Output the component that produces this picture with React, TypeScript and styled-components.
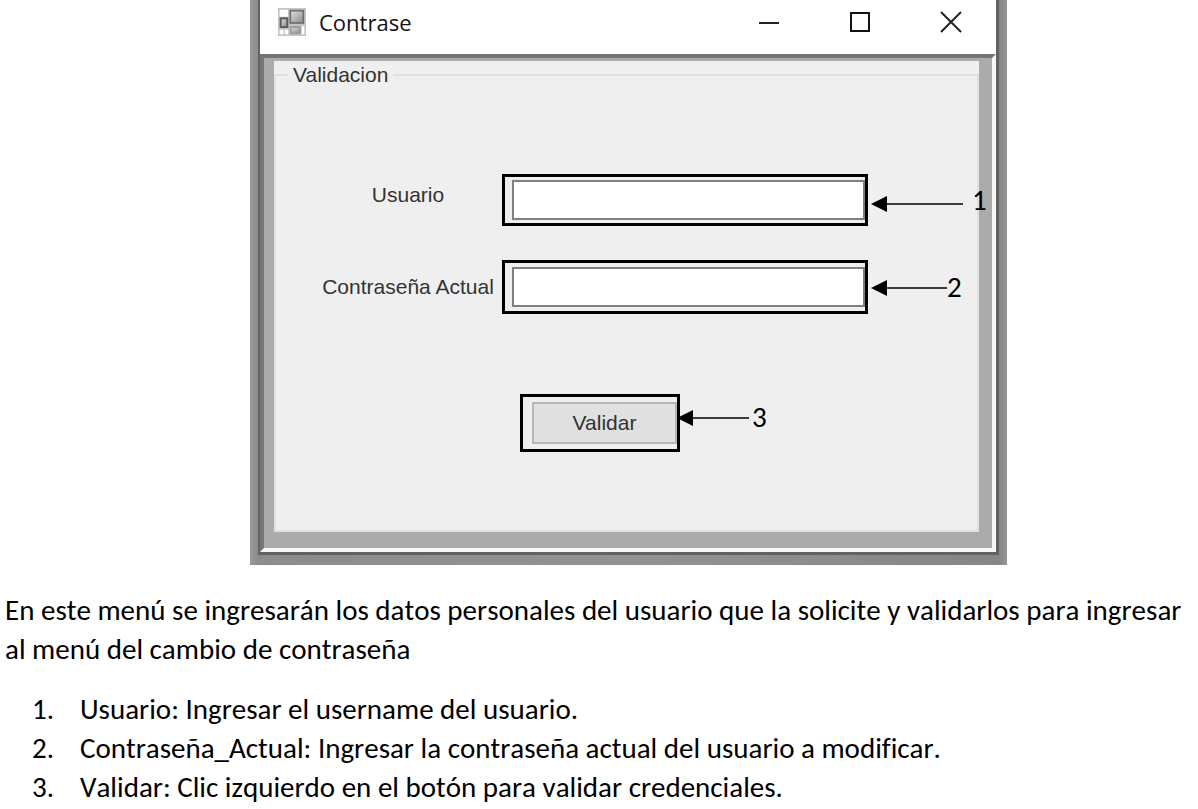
import React from "react";
import styled, { createGlobalStyle } from "styled-components";

const GlobalStyle = createGlobalStyle`
  *, *::before, *::after { box-sizing: border-box; }
  body {
    margin: 0;
    background: #fff;
    color: #000;
    font-family: Carlito, Lato, sans-serif;
    font-size: 29px;
    line-height: 39px;
    font-kerning: none;
    font-variant-ligatures: none;
  }
`;

type Align = "start" | "center" | "end";

const Page = styled.main`
  display: flex;
  flex-direction: column;
`;

const Figure = styled.figure`
  width: calc(100% - 250px);
  max-width: 757px;
  margin: 0 0 26px 250px;
  padding: 0 8px 10px;
  background: linear-gradient(to right, #9a9a9a, #8c8c8c 8px, #929292 50%, #868686 749px, #969696);
`;

const Window = styled.section`
  border: solid #626262;
  border-width: 0 3px 3px 2px;
  background: #fff;
`;

const TitleBar = styled.header`
  display: flex;
  align-items: center;
  height: 54px;
  padding: 0 0 10px 18px;
`;

const Title = styled.h1`
  flex: 1;
  margin: 0 0 0 13px;
  font: 400 22px/30px "Open Sans", sans-serif;
  color: #111;
`;

const CaptionButton = styled.button`
  display: flex;
  align-items: center;
  justify-content: center;
  width: 91px;
  height: 44px;
  padding: 0;
  border: 0;
  background: none;
`;

const Client = styled.div`
  padding: 4px 13px 16px 10px;
  border: 4px solid;
  border-color: #757575 #f8f8f8 #f8f8f8 #757575;
  background: #ababab;
`;

const Group = styled.fieldset`
  display: block;
  min-width: 0;
  margin: 0;
  padding: 86px 0 78px 42px;
  border: 2px solid #e0e0e0;
  background: #efefef;
  font: 400 21px/42px "Liberation Sans", Arial, sans-serif;
  color: #333;
  box-shadow: 0 -13px 0 #efefef;
  clip-path: inset(-13px -40px 0 0);
`;

const Legend = styled.legend`
  margin-left: -30px;
  padding: 0 5px;
  line-height: 26px;
  background: #efefef;
`;

const Row = styled.div<{ $height: number; $gap?: number }>`
  display: flex;
  align-items: center;
  height: ${(p) => p.$height}px;
  margin-top: ${(p) => p.$gap ?? 0}px;
`;

const ButtonRow = styled(Row)`
  padding-left: 202px;
`;

const Label = styled.label<{ $align?: Align }>`
  flex: 0 0 180px;
  align-self: ${(p) => p.$align ?? "center"};
  margin-right: 4px;
  text-align: center;
  white-space: nowrap;
`;

const Highlight = styled.div<{ $width: number; $inset: number }>`
  display: flex;
  align-items: center;
  flex: none;
  width: ${(p) => p.$width}px;
  height: 100%;
  padding-left: ${(p) => p.$inset}px;
  border: 3px solid #000;
`;

const TextBox = styled.input`
  width: 100%;
  min-width: 0;
  height: 40px;
  padding: 0 8px;
  border: 2px solid #808080;
  border-radius: 0;
  background: #fff;
  font: inherit;
  outline: 0;
`;

const SubmitButton = styled.button`
  width: 100%;
  height: 42px;
  padding: 0;
  border: 2px solid #b6b6b6;
  border-radius: 0;
  background: #e0e0e0;
  font: inherit;
  line-height: 38px;
  color: #333;
`;

const ArrowSvg = styled.svg<{ $align?: Align; $gap: number }>`
  flex: none;
  align-self: ${(p) => p.$align ?? "center"};
  margin-left: ${(p) => p.$gap}px;
`;

const CalloutNumber = styled.span<{ $align?: Align; $gap?: number }>`
  align-self: ${(p) => p.$align ?? "center"};
  margin-left: ${(p) => p.$gap ?? 0}px;
  font: 400 29px/46px Carlito, Lato, sans-serif;
  color: #000;
`;

const Paragraph = styled.p`
  margin: 0 0 21px;
  padding-left: 5px;
`;

const Steps = styled.ol`
  margin: 0;
  padding: 0;
  list-style: none;
`;

const Step = styled.li`
  display: grid;
  grid-template-columns: 48px 1fr;
  padding-left: 32px;
`;

function Arrow({ width, gap, align }: { width: number; gap: number; align?: Align }) {
  return (
    <ArrowSvg $gap={gap} $align={align} width={width} height="46" aria-hidden="true">
      <path d={`M14 24H${width}`} stroke="#3c3c3c" strokeWidth="2" />
      <path d="M0 24L16 16V32Z" fill="#000" />
    </ArrowSvg>
  );
}

function FormIcon() {
  return (
    <svg width="28" height="28" viewBox="0 0 84 84" aria-hidden="true">
      <defs>
        <linearGradient id="pane" x1="0" y1="0" x2="1" y2="1">
          <stop offset="0" stopColor="#e0e0e0" />
          <stop offset="1" stopColor="#8a8a8a" />
        </linearGradient>
      </defs>
      <rect width="84" height="84" fill="#c4c4c4" />
      <path d="M5 5H30V26H5ZM5 65H17V79H5ZM21 65H31V79H21ZM71 55H79V79H71Z" fill="#fff" />
      <rect x="37" y="8" width="39" height="37" fill="url(#pane)" stroke="#6c6c6c" strokeWidth="5" />
      <rect x="8" y="31" width="20" height="26" fill="url(#pane)" stroke="#5c5c5c" strokeWidth="6" />
      <rect x="38" y="57" width="28" height="19" fill="url(#pane)" stroke="#9a9a9a" strokeWidth="5" />
    </svg>
  );
}

const steps = [
  "Usuario: Ingresar el username del usuario.",
  "Contraseña_Actual: Ingresar la contraseña actual del usuario a modificar.",
  "Validar: Clic izquierdo en el botón para validar credenciales.",
];

export default function App() {
  return (
    <Page>
      <GlobalStyle />
      <Figure>
        <Window>
          <TitleBar>
            <FormIcon />
            <Title>Contrase</Title>
            <CaptionButton aria-label="Minimizar">
              <svg width="22" height="22"><path d="M1 12H21" stroke="#222" strokeWidth="2" /></svg>
            </CaptionButton>
            <CaptionButton aria-label="Maximizar">
              <svg width="22" height="22"><path d="M2 2H20V20H2Z" fill="none" stroke="#111" strokeWidth="2" /></svg>
            </CaptionButton>
            <CaptionButton aria-label="Cerrar">
              <svg width="22" height="22"><path d="M1 1L21 21M21 1L1 21" stroke="#222" strokeWidth="2" /></svg>
            </CaptionButton>
          </TitleBar>
          <Client>
            <Group>
              <Legend>Validacion</Legend>
              <Row $height={52}>
                <Label htmlFor="usuario" $align="start">Usuario</Label>
                <Highlight $width={366} $inset={7}>
                  <TextBox id="usuario" type="text" />
                </Highlight>
                <Arrow width={92} gap={3} align="end" />
                <CalloutNumber $gap={9}>1</CalloutNumber>
              </Row>
              <Row $height={54} $gap={34}>
                <Label htmlFor="actual">Contraseña Actual</Label>
                <Highlight $width={366} $inset={7}>
                  <TextBox id="actual" type="password" />
                </Highlight>
                <Arrow width={76} gap={3} />
                <CalloutNumber>2</CalloutNumber>
              </Row>
              <ButtonRow $height={58} $gap={80}>
                <Highlight $width={160} $inset={9}>
                  <SubmitButton type="button">Validar</SubmitButton>
                </Highlight>
                <Arrow width={72} gap={-3} align="start" />
                <CalloutNumber $gap={3} $align="start">3</CalloutNumber>
              </ButtonRow>
            </Group>
          </Client>
        </Window>
      </Figure>
      <Paragraph>
        En este menú se ingresarán los datos personales del usuario que la solicite y validarlos para ingresar
        al menú del cambio de contraseña
      </Paragraph>
      <Steps>
        {steps.map((text, i) => (
          <Step key={text}>
            <span>{i + 1}.</span>
            <span>{text}</span>
          </Step>
        ))}
      </Steps>
    </Page>
  );
}
